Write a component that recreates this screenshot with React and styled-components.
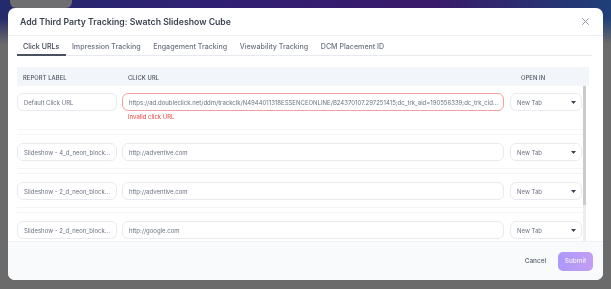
import React from "react";
import styled, { createGlobalStyle } from "styled-components";

const Global = createGlobalStyle`
  html, body { margin: 0; padding: 0; }
  body {
    width: 611px; height: 289px; overflow: hidden;
    background: #6b6b6b;
    font-family: Inter, "Noto Sans", sans-serif;
  }
  * { box-sizing: border-box; }
`;

const Backdrop = styled.div`
  width: 611px;
  height: 289px;
  background: #6b6b6b;
`;

const TopBar = styled.div`
  height: 44px;
  padding: 0 0 0 10px;
  background: linear-gradient(90deg, #242a6c 0%, #302074 35%, #3a1a6a 70%, #1f3f78 100%);
  mask-image: linear-gradient(180deg, #000 0%, #000 40%, transparent 100%);
`;

const Blob = styled.div`
  width: 62px;
  height: 8px;
  background: #6e6e70;
  border-radius: 0 0 6px 6px;
`;

const Modal = styled.div`
  position: fixed;
  left: 8px;
  top: 8px;
  width: 595px;
  height: 272px;
  background: #fff;
  border-radius: 7px;
  display: flex;
  flex-direction: column;
  overflow: hidden;
`;

const Header = styled.div`
  height: 28px;
  padding: 0 13px 0 12px;
  display: flex;
  align-items: center;
  justify-content: space-between;
  border-bottom: 1px solid #eef1f5;
`;

const Title = styled.h2`
  margin: 0;
  font-size: 8.7px;
  font-weight: 600;
  color: #3b4351;
`;

const Close = styled.button`
  border: 0;
  background: none;
  padding: 0;
  width: 10px;
  height: 10px;
  display: flex;
  align-items: center;
  justify-content: center;
`;

const Body = styled.div`
  flex: 1;
  min-height: 0;
  padding: 1px 14px 0 9px;
  display: flex;
  flex-direction: column;
`;

const Tabs = styled.div`
  display: flex;
  gap: 0;
  border-bottom: 1px solid #e6e9ee;
  margin-right: -3px;
`;

const Tab = styled.div`
  height: 19px;
  padding: 1px 6.5px 0 6px;
  display: flex;
  align-items: center;
  font-size: 7.1px;
  font-weight: 500;
  color: ${(p) => (p.$active ? "#3d4451" : "#6b7280")};
  border-bottom: 2px solid ${(p) => (p.$active ? "#4b5160" : "transparent")};
  margin-bottom: -1px;
`;

const TableHead = styled.div`
  margin-top: 11px;
  height: 19px;
  padding-top: 1px;
  background: #f2f5f9;
  display: grid;
  grid-template-columns: 105px 388px 1fr;
  align-items: center;
`;

const HeadCell = styled.div`
  padding-left: ${(p) => p.$pad || 6}px;
  font-size: 5.8px;
  font-weight: 500;
  letter-spacing: 0.1px;
  color: #4b5260;
  text-transform: uppercase;
`;

const Scroll = styled.div`
  position: relative;
  flex: 1;
  min-height: 0;
  overflow: hidden;
  padding-right: 6px;
`;

const Track = styled.div`
  position: absolute;
  top: 0;
  bottom: 0;
  right: 3px;
  width: 3px;
  background: #eeeeee;
`;

const Thumb = styled.div`
  height: 119px;
  background: #cbcbcb;
`;

const Row = styled.div`
  display: grid;
  grid-template-columns: 100px 382px 73px;
  column-gap: 5px;
  align-items: start;
  padding: 8px 0 7px;
  border-top: 1px solid #f3f4f6;
  border-bottom: 1px solid #f3f4f6;
  margin-bottom: 4px;
  ${(p) => (p.$first ? "border-top: 0; padding-top: 7px;" : "")}
`;

const Field = styled.div`
  display: flex;
  flex-direction: column;
  min-width: 0;
`;

const Input = styled.div`
  height: 18px;
  border: 1px solid ${(p) => (p.$error ? "#f4a0a0" : "#e8eaee")};
  border-radius: 6px;
  padding: 0 6px;
  display: flex;
  align-items: center;
  font-size: 6px;
  color: #6b7280;
  white-space: nowrap;
  overflow: hidden;
  background: #fff;
`;

const ErrorText = styled.div`
  margin-top: 1px;
  line-height: 10px;
  padding-left: 6px;
  font-size: 6px;
  color: #ef4444;
`;

const Select = styled(Input)`
  margin-left: 1px;
  justify-content: space-between;
  padding: 0 5px 0 6px;
`;

const Footer = styled.div`
  height: 39px;
  flex-shrink: 0;
  background: #f9fafb;
  border-top: 1px solid #f0f1f4;
  display: flex;
  align-items: center;
  justify-content: flex-end;
  gap: 12px;
  padding: 0 10px 0 0;
`;

const Cancel = styled.button`
  border: 0;
  background: none;
  padding: 0;
  font-family: inherit;
  font-size: 6.4px;
  font-weight: 500;
  color: #555c6a;
`;

const Submit = styled.button`
  border: 0;
  height: 19px;
  width: 35px;
  border-radius: 5px;
  background: linear-gradient(90deg, #ad98fb, #c39ef2);
  font-family: inherit;
  font-size: 6.4px;
  font-weight: 500;
  color: rgba(255, 255, 255, 0.85);
  padding: 0;
`;

const Caret = () => (
  <svg width="5" height="3" viewBox="0 0 5 3">
    <path d="M0 0 L5 0 L2.5 3 Z" fill="#3a4150" />
  </svg>
);

const rows = [
  {
    label: "Default Click URL",
    url: "https://ad.doubleclick.net/ddm/trackclk/N4944011318ESSENCEONLINE/B24370107.297251415;dc_trk_aid=190556339;dc_trk_cid...",
    error: "Invalid click URL",
  },
  { label: "Slideshow - 4_d_neon_block...", url: "http://adventive.com" },
  { label: "Slideshow - 2_d_neon_block...", url: "http://adventive.com" },
  { label: "Slideshow - 2_d_neon_block...", url: "http://google.com" },
];

const tabs = [
  "Click URLs",
  "Impression Tracking",
  "Engagement Tracking",
  "Viewability Tracking",
  "DCM Placement ID",
];

export default function App() {
  return (
    <>
      <Global />
      <Backdrop>
        <TopBar>
          <Blob />
        </TopBar>
      </Backdrop>
      <Modal>
        <Header>
          <Title>Add Third Party Tracking: Swatch Slideshow Cube</Title>
          <Close aria-label="Close">
            <svg width="7" height="7" viewBox="0 0 7 7">
              <path d="M0.5 0.5 L6.5 6.5 M6.5 0.5 L0.5 6.5" stroke="#8a909b" strokeWidth="0.9" strokeLinecap="round" />
            </svg>
          </Close>
        </Header>
        <Body>
          <Tabs>
            {tabs.map((t, i) => (
              <Tab key={t} $active={i === 0}>{t}</Tab>
            ))}
          </Tabs>
          <TableHead>
            <HeadCell>Report Label</HeadCell>
            <HeadCell>Click URL</HeadCell>
            <HeadCell $pad={11}>Open In</HeadCell>
          </TableHead>
          <Scroll>
            {rows.map((r, i) => (
              <Row key={i} $first={i === 0}>
                <Input>{r.label}</Input>
                <Field>
                  <Input $error={!!r.error}>{r.url}</Input>
                  {r.error && <ErrorText>{r.error}</ErrorText>}
                </Field>
                <Select>
                  <span>New Tab</span>
                  <Caret />
                </Select>
              </Row>
            ))}
            <Track>
              <Thumb />
            </Track>
          </Scroll>
        </Body>
        <Footer>
          <Cancel>Cancel</Cancel>
          <Submit>Submit</Submit>
        </Footer>
      </Modal>
    </>
  );
}
